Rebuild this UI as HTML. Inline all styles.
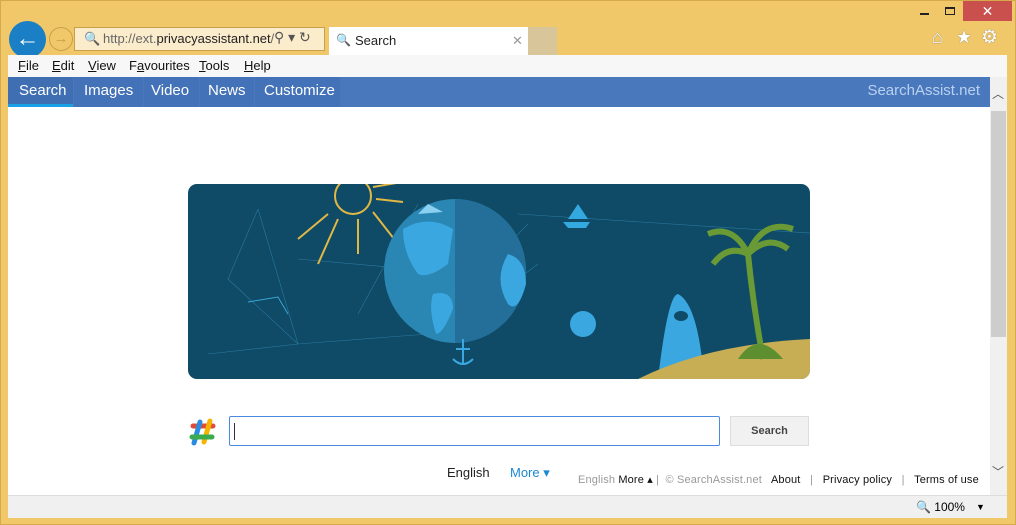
<!DOCTYPE html><html><head><style>
*{margin:0;padding:0;box-sizing:border-box}
body{width:1016px;height:525px;background:#f0c86a;font-family:"Liberation Sans",sans-serif;position:relative;overflow:hidden}
.a{position:absolute}
</style></head><body>
<div class="a" style="left:0;top:0;width:1016px;height:525px;border:1px solid #d6a94a"></div>
<div class="a" style="left:920px;top:13px;width:9px;height:2px;background:#222"></div>
<div class="a" style="left:945px;top:7px;width:10px;height:8px;border:1px solid #222;border-top-width:2px"></div>
<div class="a" style="left:963px;top:1px;width:49px;height:20px;background:#c9504d;color:#fff;font-size:14px;text-align:center;line-height:20px">✕</div>
<div class="a" style="left:932px;top:27px;font-size:18px;color:#fff;text-shadow:0 0 1px #555">⌂</div>
<div class="a" style="left:956px;top:27px;font-size:18px;color:#fff;text-shadow:0 0 1px #555">★</div>
<div class="a" style="left:981px;top:26px;font-size:19px;color:#fff;text-shadow:0 0 1px #555">⚙</div>
<div class="a" style="left:9px;top:21px;width:37px;height:37px;border-radius:50%;background:#1a7fc4;color:#fff;font-size:24px;font-weight:bold;text-align:center;line-height:35px">←</div>
<div class="a" style="left:49px;top:27px;width:24px;height:24px;border-radius:50%;border:1px solid #c9a04a;color:#c9a04a;font-size:15px;text-align:center;line-height:22px">→</div>
<div class="a" style="left:74px;top:27px;width:251px;height:24px;background:#fbeccb;border:1px solid #c9a04a;font-size:13px;line-height:22px;padding-left:28px;color:#666">http://ext.<span style="color:#222">privacyassistant.net</span>/</div>
<div class="a" style="left:84px;top:31px;font-size:13px;color:#5a7fa5">🔍</div>
<div class="a" style="left:274px;top:29px;font-size:14px;color:#555">⚲ ▾ ↻</div>
<div class="a" style="left:329px;top:27px;width:199px;height:28px;background:#fff;font-size:13px;line-height:28px;padding-left:26px;color:#222">Search<span style="position:absolute;left:183px;color:#999">✕</span></div>
<div class="a" style="left:336px;top:33px;font-size:12px">🔍</div>
<div class="a" style="left:528px;top:27px;width:29px;height:28px;background:#d8c59a"></div>
<div class="a" style="left:8px;top:55px;width:999px;height:22px;background:#f7f7f7;font-size:13px;line-height:22px;color:#111">
<span class="a" style="left:10px"><u>F</u>ile</span><span class="a" style="left:44px"><u>E</u>dit</span><span class="a" style="left:80px"><u>V</u>iew</span><span class="a" style="left:121px">F<u>a</u>vourites</span><span class="a" style="left:191px"><u>T</u>ools</span><span class="a" style="left:236px"><u>H</u>elp</span></div>
<div class="a" style="left:8px;top:77px;width:982px;height:418px;background:#fff"></div>
<div class="a" style="left:8px;top:77px;width:982px;height:30px;background:#4a78bd;color:#fff;font-size:15px;line-height:28px">
<span class="a" style="left:0;width:65px;height:30px;background:#3f6fb2;border-bottom:3px solid #1aa1e6;padding-left:11px">Search</span>
<span class="a" style="left:66px;width:69px;height:30px;background:#4372b8;padding-left:10px">Images</span>
<span class="a" style="left:136px;width:55px;height:30px;background:#4372b8;padding-left:7px">Video</span>
<span class="a" style="left:192px;width:54px;height:30px;background:#4372b8;padding-left:8px">News</span>
<span class="a" style="left:247px;width:85px;height:30px;background:#4372b8;padding-left:9px">Customize</span>
<span class="a" style="right:10px;color:#b9d1f0">SearchAssist.net</span></div>
<div class="a" style="left:990px;top:77px;width:17px;height:418px;background:#f0f0f0"></div>
<div class="a" style="left:991px;top:111px;width:15px;height:226px;background:#cdcdcd"></div>
<div class="a" style="left:992px;top:85px;font-size:12px;color:#555">︿</div>
<div class="a" style="left:992px;top:463px;font-size:12px;color:#555">﹀</div>
<svg class="a" style="left:188px;top:184px" width="622" height="195" viewBox="0 0 622 195">
<defs><clipPath id="c"><rect width="622" height="195" rx="9"/></clipPath></defs>
<g clip-path="url(#c)">
<rect width="622" height="195" fill="#0f4a66"/>
<g stroke="#2a7aa0" stroke-width="0.6" fill="none"><path d="M70 25 L110 160 L20 170 M70 25 L40 95 L110 160 L240 150 M110 75 L280 90 M340 40 L260 120 M790 60 L330 30 M350 80 L310 110 M230 20 L170 130"/></g>
<g stroke="#e0b845" stroke-width="2" fill="none"><circle cx="165" cy="12" r="18"/><path d="M140 30 L110 55 M150 35 L130 80 M170 35 L170 70 M185 28 L210 60 M188 15 L215 18 M185 3 L220 -3"/></g>
<ellipse cx="267" cy="87" rx="71" ry="72" fill="#2a86b2"/>
<path d="M267 15 A71 72 0 0 1 267 159 Z" fill="#236f99"/>
<path d="M215 45 Q240 30 265 45 L260 80 Q240 95 230 90 Q215 70 215 45Z M245 110 Q265 105 265 125 Q255 150 248 150 Q240 125 245 110Z M320 70 Q338 75 338 100 Q330 130 320 120 Q305 95 320 70Z" fill="#3aa7e0"/>
<path d="M230 30 L240 20 L255 28Z" fill="#8ad0f0"/>
<path d="M60 118 L90 113 L100 130" stroke="#3ba6d6" fill="none"/>
<path d="M380 35 L390 20 L400 35Z M375 38 L402 38 L398 44 L380 44Z" fill="#34a9e0"/>
<path d="M470 195 Q480 110 490 110 Q510 120 516 195Z" fill="#3aa7e0"/>
<ellipse cx="493" cy="132" rx="7" ry="5" fill="#0f4a66"/>
<path d="M450 195 Q520 160 622 155 L622 195Z" fill="#c7ae55"/>
<path d="M575 175 Q565 120 560 70 M560 70 Q540 60 525 80 M560 70 Q580 50 600 65 M560 70 Q545 40 520 50 M560 70 Q575 35 605 45" stroke="#6a9a35" stroke-width="6" fill="none"/>
<path d="M550 175 Q570 145 595 175Z" fill="#5d8f30"/>
<circle cx="395" cy="140" r="13" fill="#3aa7e0"/>
<path d="M275 155 L275 180 M268 165 L282 165 M265 175 Q275 185 285 175" stroke="#3aa7e0" stroke-width="2" fill="none"/>
</g></svg>
<svg class="a" style="left:188px;top:418px" width="30" height="28"><g stroke-linecap="round" stroke-width="5"><line x1="5" y1="8" x2="25" y2="8" stroke="#dd4b39"/><line x1="12" y1="4" x2="6" y2="25" stroke="#2a8ce0"/><line x1="22" y1="3" x2="16" y2="24" stroke="#f4b400"/><line x1="4" y1="19" x2="24" y2="19" stroke="#3cab4f"/></g></svg>
<div class="a" style="left:229px;top:416px;width:491px;height:30px;border:1px solid #4a8ae0;border-radius:2px"><div style="position:absolute;left:4px;top:6px;width:1px;height:17px;background:#333"></div></div>
<div class="a" style="left:730px;top:416px;width:79px;height:30px;background:#f1f1f1;border:1px solid #ddd;font-size:11px;font-weight:bold;color:#444;text-align:center;line-height:28px">Search</div>
<div class="a" style="left:447px;top:465px;font-size:13px;color:#222">English</div>
<div class="a" style="left:510px;top:465px;font-size:13px;color:#1a88d0">More ▾</div>
<div class="a" style="left:578px;top:473px;font-size:11px;color:#999;white-space:nowrap;letter-spacing:0.15px">English <span style="color:#111">More ▴</span> | &nbsp;© SearchAssist.net &nbsp; <span style="color:#111">About</span> &nbsp; | &nbsp; <span style="color:#111">Privacy policy</span> &nbsp; | &nbsp; <span style="color:#111">Terms of use</span></div>
<div class="a" style="left:8px;top:495px;width:999px;height:23px;background:#f0f0f0;border-top:1px solid #ddd;font-size:12px;line-height:22px"><span class="a" style="left:908px">🔍 100%</span><span class="a" style="left:968px;font-size:9px">▼</span></div>
</body></html>
